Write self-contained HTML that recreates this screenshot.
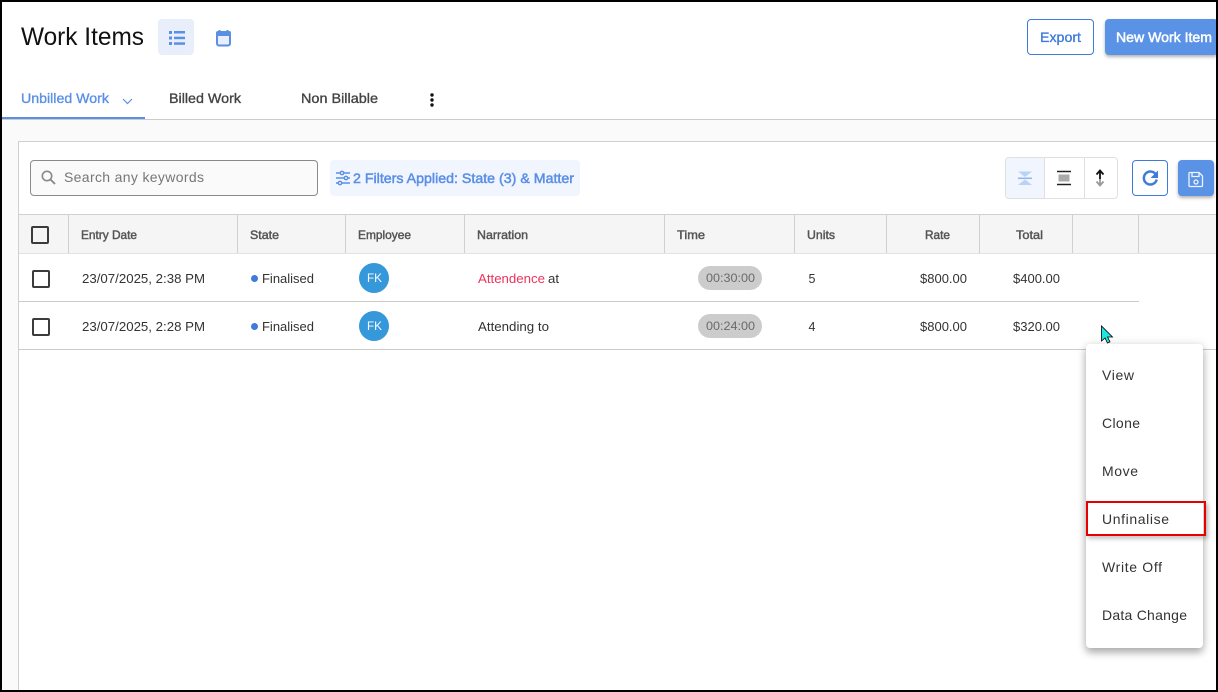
<!DOCTYPE html>
<html lang="en">
<head>
<meta charset="utf-8">
<title>Work Items</title>
<style>
html,body{margin:0;padding:0;width:1218px;height:692px;overflow:hidden;background:#fff}
.b{position:absolute;box-sizing:border-box}
svg{position:absolute;left:0;top:0}
text{font-family:"Liberation Sans",sans-serif;white-space:pre}
.m{stroke-width:.35px}
</style>
</head>
<body>
<div class="b" style="left:0;top:120px;width:1218px;height:572px;background:#fafafa"></div>
<div class="b" style="left:2px;top:119px;width:1216px;height:1px;background:#ccc"></div>
<div class="b" style="left:2px;top:117px;width:143px;height:2px;background:#5b8fe6"></div>
<div class="b" style="left:18px;top:141px;width:1200px;height:551px;background:#fff;border:1px solid #d0d0d0"></div>
<div class="b" style="left:158px;top:19px;width:36px;height:36px;background:#e8eefa;border-radius:4px"></div>
<div class="b" style="left:1027px;top:19px;width:67px;height:36px;background:#fff;border:1px solid #3f7bd9;border-radius:4px"></div>
<div class="b" style="left:1105px;top:19px;width:113px;height:36px;background:#5a92e6;border-radius:4px;box-shadow:0 2px 3px rgba(0,0,0,.3)"></div>
<div class="b" style="left:30px;top:160px;width:288px;height:36px;background:#fafafa;border:1px solid #8a8a8a;border-radius:4px"></div>
<div class="b" style="left:330px;top:160px;width:250px;height:36px;background:#f0f5fe;border-radius:4px"></div>
<div class="b" style="left:1005px;top:157px;width:113px;height:42px;background:#fff;border:1px solid #e0e0e0;border-radius:4px"></div>
<div class="b" style="left:1006px;top:158px;width:39px;height:40px;background:#f0f5fe;border-right:1px solid #e0e0e0;border-radius:3px 0 0 3px"></div>
<div class="b" style="left:1084px;top:158px;width:1px;height:40px;background:#e0e0e0"></div>
<div class="b" style="left:1132px;top:160px;width:36px;height:36px;background:#fff;border:1px solid #3f7bd9;border-radius:4px"></div>
<div class="b" style="left:1178px;top:160px;width:36px;height:36px;background:#5a92e6;border-radius:4px;box-shadow:0 2px 3px rgba(0,0,0,.3)"></div>
<div class="b" style="left:19px;top:214px;width:1199px;height:40px;background:#f5f5f5;border-top:1px solid #d0d0d0;border-bottom:1px solid #e2e2e2"></div>
<div class="b" style="left:68px;top:215px;width:1px;height:38px;background:#d0d0d0"></div>
<div class="b" style="left:237px;top:215px;width:1px;height:38px;background:#d0d0d0"></div>
<div class="b" style="left:345px;top:215px;width:1px;height:38px;background:#d0d0d0"></div>
<div class="b" style="left:464px;top:215px;width:1px;height:38px;background:#d0d0d0"></div>
<div class="b" style="left:664px;top:215px;width:1px;height:38px;background:#d0d0d0"></div>
<div class="b" style="left:794px;top:215px;width:1px;height:38px;background:#d0d0d0"></div>
<div class="b" style="left:886px;top:215px;width:1px;height:38px;background:#d0d0d0"></div>
<div class="b" style="left:979px;top:215px;width:1px;height:38px;background:#d0d0d0"></div>
<div class="b" style="left:1072px;top:215px;width:1px;height:38px;background:#d0d0d0"></div>
<div class="b" style="left:1138px;top:215px;width:1px;height:38px;background:#d0d0d0"></div>
<div class="b" style="left:19px;top:301px;width:1120px;height:1px;background:#ccc"></div>
<div class="b" style="left:19px;top:349px;width:1199px;height:1px;background:#ccc"></div>
<div class="b" style="left:31px;top:226px;width:18px;height:18px;border:2px solid #3c3c3c;border-radius:2px"></div>
<div class="b" style="left:32px;top:270px;width:18px;height:18px;border:2px solid #3c3c3c;border-radius:2px"></div>
<div class="b" style="left:32px;top:318px;width:18px;height:18px;border:2px solid #3c3c3c;border-radius:2px"></div>
<div class="b" style="left:251px;top:275px;width:7px;height:7px;background:#3f7bd9;border-radius:50%"></div>
<div class="b" style="left:251px;top:323px;width:7px;height:7px;background:#3f7bd9;border-radius:50%"></div>
<div class="b" style="left:359px;top:263px;width:30px;height:30px;background:#3498db;border-radius:50%"></div>
<div class="b" style="left:359px;top:311px;width:30px;height:30px;background:#3498db;border-radius:50%"></div>
<div class="b" style="left:698px;top:266px;width:64px;height:24px;background:#ccc;border-radius:12px"></div>
<div class="b" style="left:698px;top:314px;width:64px;height:24px;background:#ccc;border-radius:12px"></div>
<div class="b" style="left:1086px;top:344px;width:117px;height:304px;background:#fff;border-radius:4px;box-shadow:0 5px 8px rgba(0,0,0,.25),0 1px 10px rgba(0,0,0,.15)"></div>
<div class="b" style="left:1086px;top:501px;width:120px;height:35px;border:2px solid #e60000;box-shadow:2px 3px 4px rgba(0,0,0,.22)"></div>

<svg width="1218" height="692" viewBox="0 0 1218 692" xmlns="http://www.w3.org/2000/svg">
<text x="21" y="45" font-size="25" fill="#111" textLength="123" lengthAdjust="spacingAndGlyphs">Work Items</text>
<g fill="#5b8fe6"><rect x="169" y="31" width="3" height="3"/><rect x="169" y="36.500" width="3" height="3"/><rect x="169" y="42" width="3" height="3"/><rect x="174" y="31" width="11" height="2.500"/><rect x="174" y="36.700" width="11" height="2.500"/><rect x="174" y="42.300" width="11" height="2.500"/></g>
<rect x="217" y="32.500" width="13" height="13" rx="2" fill="#e8eefa" stroke="#5b8fe6" stroke-width="2"/><path d="M216 33a2 2 0 0 1 2-2h11a2 2 0 0 1 2 2v3h-15z" fill="#5b8fe6"/><path d="M219.500 30v3M227.500 30v3" stroke="#5b8fe6" stroke-width="2"/>

<text class="m" x="21" y="103" font-size="14" fill="#5b8fe6" stroke="#5b8fe6" textLength="88" lengthAdjust="spacingAndGlyphs">Unbilled Work</text>
<path d="M123 99l4.500 4.500 4.500-4.500" fill="none" stroke="#5b8fe6" stroke-width="1.200"/>
<text class="m" x="169" y="103" font-size="14" fill="#444" stroke="#444" textLength="72" lengthAdjust="spacingAndGlyphs">Billed Work</text>
<text class="m" x="301" y="103" font-size="14" fill="#444" stroke="#444" textLength="77" lengthAdjust="spacingAndGlyphs">Non Billable</text>
<g fill="#111"><circle cx="432" cy="95" r="1.700"/><circle cx="432" cy="100" r="1.700"/><circle cx="432" cy="105" r="1.700"/></g>

<text class="m" x="1040" y="42" font-size="14" fill="#3f7bd9" stroke="#3f7bd9" textLength="41" lengthAdjust="spacingAndGlyphs">Export</text>
<text x="1116" y="42" font-size="14" fill="#fff" stroke="#fff" stroke-width=".5" textLength="96" lengthAdjust="spacingAndGlyphs">New Work Item</text>

<circle cx="47" cy="176" r="4.700" fill="none" stroke="#888" stroke-width="1.600"/><path d="M50.500 179.500l4.500 4.500" stroke="#888" stroke-width="1.900"/>
<text x="64" y="182" font-size="14" fill="#777" textLength="140">Search any keywords</text>

<g fill="none" stroke="#5b8fe6" stroke-width="1.400"><path d="M336 173h4M344 173h6M336 178h8M348 178h2M336 183h2M342 183h8"/><circle cx="342" cy="173" r="1.700"/><circle cx="346" cy="178" r="1.700"/><circle cx="340" cy="183" r="1.700"/></g>
<text x="353" y="183" font-size="14" fill="#5b8fe6" stroke="#5b8fe6" stroke-width=".5" textLength="221" lengthAdjust="spacingAndGlyphs">2 Filters Applied: State (3) &amp; Matter</text>

<path d="M1018 171.500h14l-7 5.500zM1018 185h14l-7-5.500z" fill="#b9d2f6"/><path d="M1018 178.300h14" stroke="#8fb6ef" stroke-width="1.500"/>
<path d="M1057 171.500h14M1057 184.500h14" stroke="#222" stroke-width="1.500"/><rect x="1058.500" y="174.500" width="11" height="7" fill="#aaa"/>
<path d="M1100 171v8" stroke="#111" stroke-width="1.800"/><path d="M1096.500 174.500l3.500-4 3.500 4" fill="none" stroke="#111" stroke-width="1.800"/>
<path d="M1100 179v6" stroke="#999" stroke-width="1.800"/><path d="M1096.500 181.500l3.500 4 3.500-4" fill="none" stroke="#999" stroke-width="1.800"/>

<path d="M1155.500 174a6.500 6.500 0 1 0 1.200 5.500" fill="none" stroke="#3f7bd9" stroke-width="2.500"/><path d="M1158 170.500v7.500h-7.500z" fill="#3f7bd9"/>
<g fill="none" stroke="#fff" stroke-width="1.300" opacity=".9"><path d="M1190 172.500h9l3.500 3.500v9.500a1 1 0 0 1-1 1h-11.500a1 1 0 0 1-1-1v-12a1 1 0 0 1 1-1z"/><path d="M1192 173v3.500h7V173"/><circle cx="1196" cy="182" r="2"/></g>

<g font-size="12" fill="#555" stroke="#555" style="stroke-width:.45px">
<text x="81" y="239" textLength="56" lengthAdjust="spacingAndGlyphs">Entry Date</text>
<text x="250" y="239" textLength="29" lengthAdjust="spacingAndGlyphs">State</text>
<text x="358" y="239" textLength="53" lengthAdjust="spacingAndGlyphs">Employee</text>
<text x="477" y="239" textLength="51" lengthAdjust="spacingAndGlyphs">Narration</text>
<text x="677" y="239" textLength="28" lengthAdjust="spacingAndGlyphs">Time</text>
<text x="807" y="239" textLength="28" lengthAdjust="spacingAndGlyphs">Units</text>
<text x="925" y="239" textLength="25" lengthAdjust="spacingAndGlyphs">Rate</text>
<text x="1016" y="239" textLength="27" lengthAdjust="spacingAndGlyphs">Total</text>
</g>

<g font-size="12.500" fill="#333">
<text x="82" y="283" textLength="123" lengthAdjust="spacingAndGlyphs">23/07/2025, 2:38 PM</text>
<text x="262" y="283" textLength="52" lengthAdjust="spacingAndGlyphs">Finalised</text>
<text x="478" y="283" fill="#f0325a" textLength="67" lengthAdjust="spacingAndGlyphs">Attendence</text>
<text x="548" y="283" textLength="11" lengthAdjust="spacingAndGlyphs">at</text>
<text x="808.500" y="283">5</text>
<text x="920" y="283" textLength="47" lengthAdjust="spacingAndGlyphs">$800.00</text>
<text x="1013" y="283" textLength="47" lengthAdjust="spacingAndGlyphs">$400.00</text>
<text x="82" y="331" textLength="123" lengthAdjust="spacingAndGlyphs">23/07/2025, 2:28 PM</text>
<text x="262" y="331" textLength="52" lengthAdjust="spacingAndGlyphs">Finalised</text>
<text x="478" y="331" textLength="71" lengthAdjust="spacingAndGlyphs">Attending to</text>
<text x="808.500" y="331">4</text>
<text x="920" y="331" textLength="47" lengthAdjust="spacingAndGlyphs">$800.00</text>
<text x="1013" y="331" textLength="47" lengthAdjust="spacingAndGlyphs">$320.00</text>
</g>
<g font-size="12" fill="#fff">
<text x="367" y="282" textLength="15" lengthAdjust="spacingAndGlyphs">FK</text>
<text x="367" y="330" textLength="15" lengthAdjust="spacingAndGlyphs">FK</text>
</g>
<g font-size="12" fill="#6a6a6a">
<text x="706" y="282" textLength="49" lengthAdjust="spacingAndGlyphs">00:30:00</text>
<text x="706" y="330" textLength="49" lengthAdjust="spacingAndGlyphs">00:24:00</text>
</g>

<g font-size="14" fill="#333">
<text x="1102" y="380" textLength="32">View</text>
<text x="1102" y="428" textLength="38">Clone</text>
<text x="1102" y="476" textLength="36">Move</text>
<text x="1102" y="524" textLength="67">Unfinalise</text>
<text x="1102" y="572" textLength="60">Write Off</text>
<text x="1102" y="620" textLength="85">Data Change</text>
</g>

<path d="M1101.500 326v15l3.500-3 2.500 5 2.500-1.200-2.500-4.800h5z" fill="#1fe6e0" stroke="#000" stroke-width=".8"/>

<path d="M1 1H1217V691H1V1z" fill="none" stroke="#000" stroke-width="2"/>
</svg>
</body>
</html>
